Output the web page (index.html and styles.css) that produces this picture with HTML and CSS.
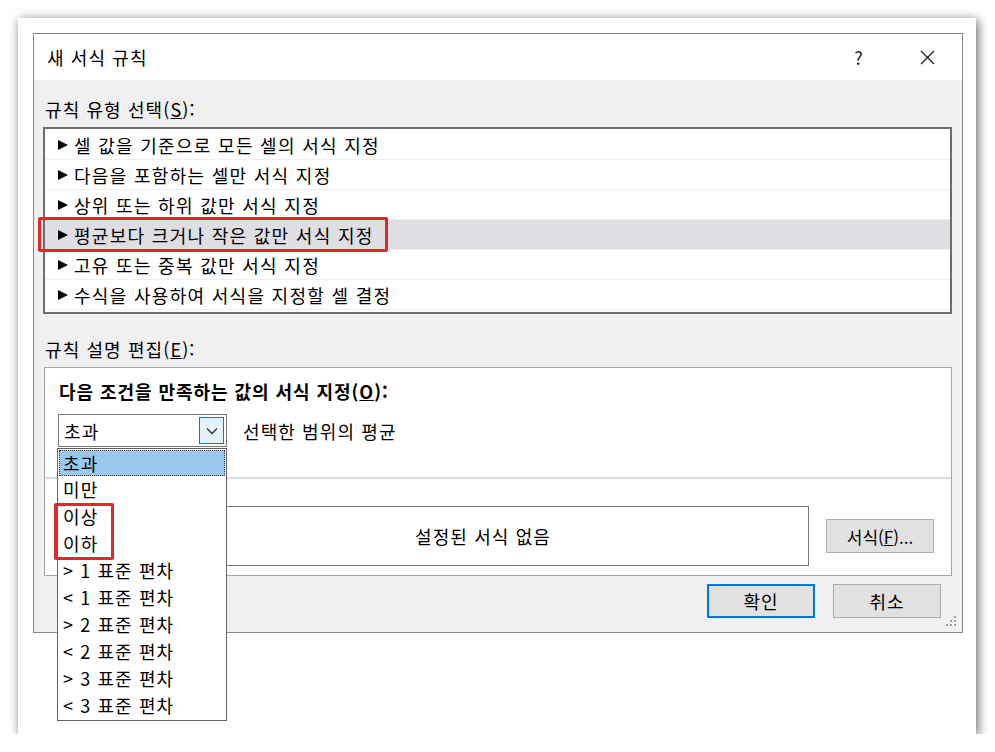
FILE: index.html
```html
<!DOCTYPE html>
<html lang="ko">
<head>
  <meta charset="UTF-8">
  <title>새 서식 규칙</title>
  <link rel="stylesheet" href="styles.css">
</head>
<body>
  <div class="frame">
    <div class="dialog">
      <div class="titlebar">
        <span class="title">새 서식 규칙</span>
        <span class="help">?</span>
        <span class="close">
          <svg width="15" height="15" viewBox="0 0 15 15"><path d="M1 1L14 14M14 1L1 14" stroke="#222" stroke-width="1.3" fill="none"/></svg>
        </span>
      </div>

      <div class="content">
        <div class="label">규칙 유형 선택(<u>S</u>):</div>
        <ul class="rule-list">
          <li><i class="tri"></i>셀 값을 기준으로 모든 셀의 서식 지정</li>
          <li><i class="tri"></i>다음을 포함하는 셀만 서식 지정</li>
          <li><i class="tri"></i>상위 또는 하위 값만 서식 지정</li>
          <li class="selected"><i class="tri"></i>평균보다 크거나 작은 값만 서식 지정<span class="mark mark-rule"></span></li>
          <li><i class="tri"></i>고유 또는 중복 값만 서식 지정</li>
          <li><i class="tri"></i>수식을 사용하여 서식을 지정할 셀 결정</li>
        </ul>

        <div class="label label-edit">규칙 설명 편집(<u>E</u>):</div>
        <div class="edit-box">
          <div class="cond">
            <div class="cond-title">다음 조건을 만족하는 값의 서식 지정(<u>O</u>):</div>
            <div class="cond-row">
              <div class="combo">
                <span class="combo-value">초과</span>
                <span class="combo-btn">
                  <svg width="12" height="8" viewBox="0 0 12 8"><path d="M1 1.5L6 6.5L11 1.5" stroke="#333" stroke-width="1.4" fill="none"/></svg>
                </span>
                <ul class="drop-list">
                  <li class="active">초과</li>
                  <li>미만</li>
                  <li>이상</li>
                  <li>이하</li>
                  <li>&gt; 1 표준 편차</li>
                  <li>&lt; 1 표준 편차</li>
                  <li>&gt; 2 표준 편차</li>
                  <li>&lt; 2 표준 편차</li>
                  <li>&gt; 3 표준 편차</li>
                  <li>&lt; 3 표준 편차</li>
                  <span class="mark mark-drop"></span>
                </ul>
              </div>
              <span class="cond-text">선택한 범위의 평균</span>
            </div>
          </div>
          <div class="preview-row">
            <div class="preview">설정된 서식 없음</div>
            <button class="btn btn-format">서식(<u>F</u>)...</button>
          </div>
        </div>

        <div class="actions">
          <button class="btn btn-default">확인</button>
          <button class="btn">취소</button>
        </div>
      </div>

      <div class="grip">
        <i style="right: 2px; bottom: 10px"></i>
        <i style="right: 2px; bottom: 6px"></i>
        <i style="right: 6px; bottom: 6px"></i>
        <i style="right: 2px; bottom: 2px"></i>
        <i style="right: 6px; bottom: 2px"></i>
        <i style="right: 10px; bottom: 2px"></i>
      </div>
    </div>
  </div>
</body>
</html>
```

FILE: styles.css
```css
/* Reset styles */
* {
  margin: 0;
  padding: 0;
  box-sizing: border-box;
}

body {
  font-family: "Noto Sans CJK KR", "Noto Sans", sans-serif;
  font-size: 18px;
  line-height: 24px;
  letter-spacing: 1.1px;
  color: #000;
  background-color: #fff;
}

ul {
  list-style: none;
}

/* screenshot frame */
.frame {
  margin: 18px 0 0 18px;
  width: 958px;
  height: 716px;
  padding: 15px 0 0 15px;
  background-color: #fff;
  box-shadow: 2px 2px 10px rgba(0, 0, 0, 0.6);
}

.dialog {
  position: relative;
  width: 930px;
  height: 600px;
  border: 1px solid #888;
  background-color: #f0f0f0;
}

/* title bar */
.titlebar {
  display: flex;
  align-items: center;
  height: 46px;
  padding-left: 13px;
  background-color: #fff;
}

.help {
  margin-left: auto;
  color: #222;
}

.close {
  display: flex;
  margin: 0 27px 0 56px;
}

.content {
  padding: 0 10px 0 9px;
}

.label {
  margin-top: 17px;
  padding-left: 2px;
}

.label-edit {
  margin-top: 23px;
}

/* rule type list */
.rule-list {
  margin-top: 6px;
  height: 187px;
  padding: 1px 0 2px;
  border: 2px solid #6e6e6e;
  background-color: #fff;
  letter-spacing: 1.3px;
}

.rule-list li {
  position: relative;
  display: flex;
  align-items: center;
  height: 30px;
  padding-left: 13px;
  border-bottom: 1px solid #efefef;
}

.rule-list li.selected {
  background-color: #dfdee3;
}

.tri {
  width: 0;
  height: 0;
  margin-right: 6px;
  border-top: 5px solid transparent;
  border-bottom: 5px solid transparent;
  border-left: 10px solid #000;
}

.mark {
  position: absolute;
  border: 3px solid #e3262c;
  border-radius: 2px;
}

.mark-rule {
  left: -7px;
  top: -3px;
  width: 350px;
  height: 35px;
}

/* rule description */
.edit-box {
  margin: 6px 0 0 1px;
  border: 1px solid #a5a5a5;
  background-color: #fff;
}

.cond {
  padding: 11px 0 30px 13px;
}

.cond-title {
  margin-left: 1px;
  font-weight: bold;
  letter-spacing: 0.95px;
}

.cond-row {
  display: flex;
  align-items: center;
  margin-top: 11px;
}

.combo {
  position: relative;
  display: flex;
  align-items: center;
  width: 169px;
  height: 33px;
  padding: 0 2px 0 5px;
  border: 1px solid #7a7a7a;
}

.combo-btn {
  display: flex;
  align-items: center;
  justify-content: center;
  margin-left: auto;
  width: 25px;
  height: 27px;
  border: 1px solid #0078d7;
  background-color: #e5f1fb;
}

.cond-text {
  margin-left: 16px;
}

.drop-list {
  position: absolute;
  left: -2px;
  top: 33px;
  width: 170px;
  padding: 1px;
  border: 1px solid #646464;
  background-color: #fff;
  z-index: 2;
}

.drop-list li {
  height: 27px;
  line-height: 27px;
  padding-left: 4px;
}

.drop-list li.active {
  height: 26px;
  line-height: 24px;
  padding-left: 3px;
  background-color: #99c9ef;
  border: 1px dotted #333;
}

.mark-drop {
  left: -4px;
  top: 54px;
  width: 60px;
  height: 57px;
}

.preview-row {
  display: flex;
  align-items: center;
  padding: 27px 0 9px 112px;
  border-top: 2px solid #dcdcdc;
}

.preview {
  width: 652px;
  height: 60px;
  border: 1px solid #7a7a7a;
  line-height: 58px;
  text-align: center;
}

/* buttons */
.btn {
  width: 108px;
  height: 34px;
  font-family: inherit;
  font-size: 18px;
  letter-spacing: 1px;
  color: #000;
  background-color: #e1e1e1;
  border: 1px solid #adadad;
}

.btn-format {
  margin-left: 17px;
  font-size: 17px;
  letter-spacing: 0;
}

.btn-default {
  border: 2px solid #0078d7;
}

.actions {
  display: flex;
  justify-content: flex-end;
  gap: 18px;
  margin-top: 8px;
  padding-right: 11px;
}

.grip {
  position: absolute;
  right: 4px;
  bottom: 4px;
  width: 12px;
  height: 12px;
}

.grip i {
  position: absolute;
  width: 2px;
  height: 2px;
  background-color: #a0a0a0;
}
```
